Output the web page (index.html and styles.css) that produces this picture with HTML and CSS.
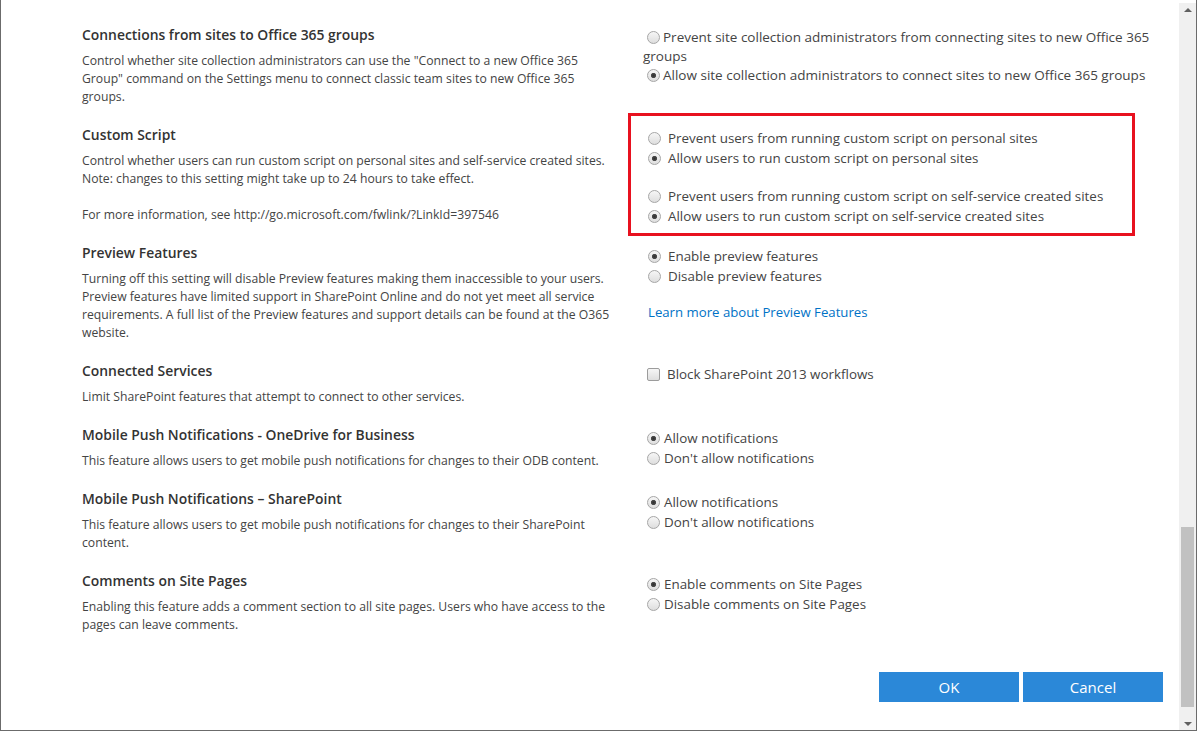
FILE: index.html
```html
<!DOCTYPE html>
<html lang="en">
<head>
<meta charset="utf-8">
<title>Settings</title>
<link rel="stylesheet" href="styles.css">
</head>
<body>
<div class="frame">
  <div class="content">
    <section class="row">
      <div class="info">
        <h3 class="title">Connections from sites to Office 365 groups</h3>
        <p class="desc">Control whether site collection administrators can use the "Connect to a new Office 365 Group" command on the Settings menu to connect classic team sites to new Office 365 groups.</p>
      </div>
      <div class="options compact">
        <div class="opt"><input type="radio" class="radio tight" name="g1">Prevent site collection administrators from connecting sites to new Office 365 groups</div>
        <div class="opt"><input type="radio" class="radio tight" name="g1" checked>Allow site collection administrators to connect sites to new Office 365 groups</div>
      </div>
    </section>

    <section class="row">
      <div class="info">
        <h3 class="title">Custom Script</h3>
        <p class="desc">Control whether users can run custom script on personal sites and self-service created sites.<br>Note: changes to this setting might take up to 24 hours to take effect.<br><br>For more information, see http://go.microsoft.com/fwlink/?LinkId=397546</p>
      </div>
      <div class="options highlight">
        <div class="opt"><input type="radio" class="radio wide" name="g2">Prevent users from running custom script on personal sites</div>
        <div class="opt"><input type="radio" class="radio wide" name="g2" checked>Allow users to run custom script on personal sites</div>
        <div class="opt spaced"><input type="radio" class="radio wide" name="g3">Prevent users from running custom script on self-service created sites</div>
        <div class="opt"><input type="radio" class="radio wide" name="g3" checked>Allow users to run custom script on self-service created sites</div>
      </div>
    </section>

    <section class="row">
      <div class="info">
        <h3 class="title">Preview Features</h3>
        <p class="desc">Turning off this setting will disable Preview features making them inaccessible to your users. Preview features have limited support in SharePoint Online and do not yet meet all service requirements. A full list of the Preview features and support details can be found at the O365 website.</p>
      </div>
      <div class="options">
        <div class="opt"><input type="radio" class="radio wide" name="g4" checked>Enable preview features</div>
        <div class="opt"><input type="radio" class="radio wide" name="g4">Disable preview features</div>
        <div class="opt link-row"><a class="link" href="#">Learn more about Preview Features</a></div>
      </div>
    </section>

    <section class="row">
      <div class="info">
        <h3 class="title">Connected Services</h3>
        <p class="desc">Limit SharePoint features that attempt to connect to other services.</p>
      </div>
      <div class="options">
        <div class="opt"><input type="checkbox" class="check">Block SharePoint 2013 workflows</div>
      </div>
    </section>

    <section class="row">
      <div class="info">
        <h3 class="title">Mobile Push Notifications - OneDrive for Business</h3>
        <p class="desc">This feature allows users to get mobile push notifications for changes to their ODB content.</p>
      </div>
      <div class="options">
        <div class="opt"><input type="radio" class="radio" name="g5" checked>Allow notifications</div>
        <div class="opt"><input type="radio" class="radio" name="g5">Don't allow notifications</div>
      </div>
    </section>

    <section class="row">
      <div class="info">
        <h3 class="title">Mobile Push Notifications – SharePoint</h3>
        <p class="desc">This feature allows users to get mobile push notifications for changes to their SharePoint content.</p>
      </div>
      <div class="options">
        <div class="opt"><input type="radio" class="radio" name="g6" checked>Allow notifications</div>
        <div class="opt"><input type="radio" class="radio" name="g6">Don't allow notifications</div>
      </div>
    </section>

    <section class="row">
      <div class="info">
        <h3 class="title">Comments on Site Pages</h3>
        <p class="desc">Enabling this feature adds a comment section to all site pages. Users who have access to the pages can leave comments.</p>
      </div>
      <div class="options">
        <div class="opt"><input type="radio" class="radio" name="g7" checked>Enable comments on Site Pages</div>
        <div class="opt"><input type="radio" class="radio" name="g7">Disable comments on Site Pages</div>
      </div>
    </section>

    <div class="actions">
      <button class="btn" type="button">OK</button>
      <button class="btn" type="button">Cancel</button>
    </div>
  </div>
  <div class="scrollbar">
    <div class="sb-btn"><span class="arrow-up"></span></div>
    <div class="sb-track"><div class="sb-thumb"></div></div>
    <div class="sb-btn"><span class="arrow-down"></span></div>
  </div>
</div>
</body>
</html>
```

FILE: styles.css
```css
*, *::before, *::after { box-sizing: border-box; }

html, body {
  margin: 0;
  padding: 0;
  background: #ffffff;
}

body {
  font-family: "Open Sans", "Noto Sans", "Liberation Sans", sans-serif;
  color: #444444;
}

.frame {
  width: 1197px;
  height: 731px;
  border-left: 1px solid #6b6b6b;
  border-right: 1px solid #6b6b6b;
  border-bottom: 1px solid #6b6b6b;
  display: flex;
  overflow: hidden;
}

.content {
  flex: 1;
  padding: 26px 16px 0 81px;
  overflow: hidden;
}

.row {
  display: grid;
  grid-template-columns: 533px 1fr;
  column-gap: 28px;
  margin-bottom: 20px;
}

.title {
  margin: 0;
  font-size: 13.9px;
  font-weight: 600;
  line-height: 18px;
  color: #333333;
}

.desc {
  margin: 8px 0 0;
  font-size: 12.2px;
  line-height: 18px;
  color: #444444;
}

.options {
  padding-top: 2px;
  font-size: 13.4px;
  line-height: 20px;
  color: #444444;
}

.options.compact {
  font-size: 13.5px;
  line-height: 19px;
  padding-top: 2px;
}

.options.highlight {
  position: relative;
  margin-bottom: -4px;
}

.options.highlight::after {
  content: "";
  position: absolute;
  left: -15px;
  top: -13px;
  width: 507px;
  height: 123px;
  border: 3px solid #e8111f;
  pointer-events: none;
}

.opt.spaced {
  margin-top: 18px;
}

.opt.link-row {
  margin-top: 16px;
  padding-left: 5px;
  font-size: 13.2px;
}

.link {
  color: #0072c6;
  text-decoration: none;
}

.radio,
.check {
  appearance: none;
  -webkit-appearance: none;
  width: 13px;
  height: 13px;
  margin: 0 4px 0 4px;
  vertical-align: -2px;
  border: 1px solid #a6a6a6;
  background: linear-gradient(#f6f6f6, #dedede);
}

.radio {
  border-radius: 50%;
}

.radio:checked {
  background:
    radial-gradient(circle at 50% 50%, #2f2f2f 0, #4a4a4a 2.2px, rgba(80,80,80,0) 3px),
    linear-gradient(#f6f6f6, #dedede);
}

.radio.tight {
  margin-right: 3px;
}

.radio.wide {
  margin-left: 5px;
  margin-right: 7px;
}

.check {
  border-radius: 2px;
  margin-right: 7px;
  border-color: #9c9c9c;
}

.actions {
  display: flex;
  justify-content: flex-end;
  gap: 4px;
  margin-top: 38px;
}

.btn {
  width: 140px;
  height: 30px;
  border: none;
  background: #2b88d8;
  color: #ffffff;
  font-family: "Open Sans", "Noto Sans", sans-serif;
  font-size: 15px;
  padding: 0;
}

.scrollbar {
  width: 17px;
  margin-top: 3px;
  background: #f0f0f0;
  display: flex;
  flex-direction: column;
}

.sb-btn {
  height: 17px;
  display: flex;
  align-items: center;
  justify-content: center;
}

.arrow-up {
  width: 0;
  height: 0;
  border-left: 4px solid transparent;
  border-right: 4px solid transparent;
  border-bottom: 4px solid #606060;
  margin-top: -4px;
}

.arrow-down {
  width: 0;
  height: 0;
  border-left: 4px solid transparent;
  border-right: 4px solid transparent;
  border-top: 4px solid #606060;
  margin-top: 4px;
}

.sb-track {
  flex: 1;
  padding: 0 2px;
}

.sb-thumb {
  margin-top: 507px;
  height: 180px;
  background: #c1c1c1;
}
```
